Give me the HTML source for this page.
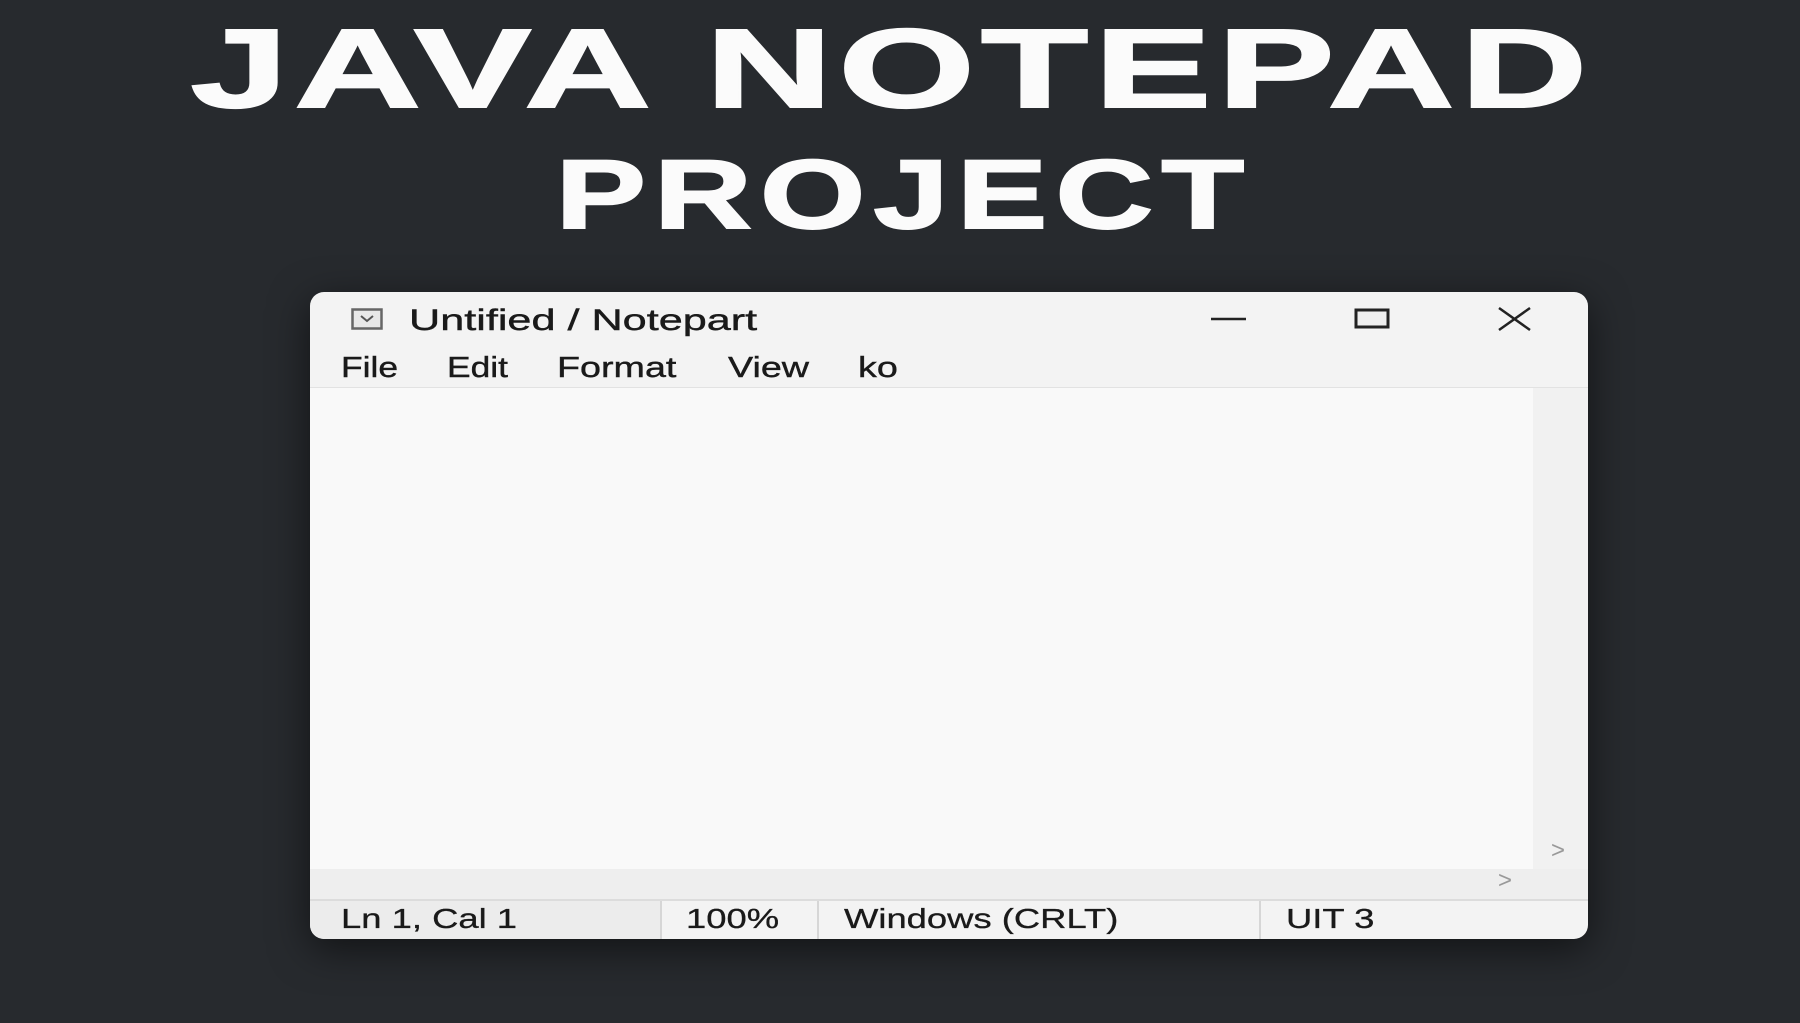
<!DOCTYPE html>
<html><head><meta charset="utf-8"><style>
*{margin:0;padding:0;box-sizing:border-box}
body{width:1800px;height:1023px;background:#272a2e;overflow:hidden;position:relative;font-family:"Liberation Sans",sans-serif}
.h{position:absolute;color:#fbfbfb;font-weight:bold;white-space:nowrap;transform-origin:center center;line-height:1;-webkit-text-stroke:2px #fbfbfb}
.win{position:absolute;left:310px;top:292px;width:1278px;height:647px;background:#f3f3f3;border-radius:14px;box-shadow:0 10px 40px rgba(0,0,0,.55);overflow:hidden}
.t{position:absolute;color:#1a1a1a;font-size:29px;white-space:nowrap;transform-origin:left center;-webkit-text-stroke:.4px #1a1a1a}
.s{position:absolute;color:#1a1a1a;font-size:28px;white-space:nowrap;transform-origin:left center;transform:scaleX(1.3);-webkit-text-stroke:.3px #1a1a1a}
</style></head><body>
<div class="h" style="left:0;width:1784px;top:13px;font-size:112px;text-align:center;letter-spacing:4px;transform:scaleX(1.565)">JAVA NOTEPAD</div>
<div class="h" style="left:0;width:1808px;top:145px;font-size:98px;text-align:center;letter-spacing:6px;transform:scaleX(1.38)">PROJECT</div>
<div class="win">
  <svg style="position:absolute;left:41px;top:16px" width="32" height="22" viewBox="0 0 32 22"><rect x="1.5" y="1.5" width="29" height="19" fill="#e8e8e8" stroke="#666" stroke-width="2.5"/><path d="M10 8l6 5 6-5" fill="none" stroke="#555" stroke-width="2"/></svg>
  <div class="t" style="left:99px;top:12px;font-size:30px;transform:scaleX(1.44)">Untified / Notepart</div>
  <svg style="position:absolute;left:900px;top:14px" width="40" height="20"><line x1="1" y1="13" x2="36" y2="13" stroke="#222" stroke-width="2.5"/></svg>
  <svg style="position:absolute;left:1044px;top:16px" width="38" height="22"><rect x="2" y="2" width="32" height="17" fill="#eee" stroke="#222" stroke-width="3"/></svg>
  <svg style="position:absolute;left:1187px;top:14px" width="36" height="26"><path d="M2 2L33 24M33 2L2 24" stroke="#222" stroke-width="2.5"/></svg>
  <div class="t" style="left:31px;top:60px;transform:scaleX(1.22)">File</div>
  <div class="t" style="left:137px;top:60px;transform:scaleX(1.22)">Edit</div>
  <div class="t" style="left:247px;top:60px;transform:scaleX(1.3)">Format</div>
  <div class="t" style="left:418px;top:60px;transform:scaleX(1.3)">View</div>
  <div class="t" style="left:548px;top:60px;transform:scaleX(1.3)">ko</div>
  <div style="position:absolute;left:0;top:95px;width:1278px;height:1px;background:#e2e2e2"></div>
  <div style="position:absolute;left:0;top:96px;width:1223px;height:481px;background:#f9f9f9"></div>
  <div style="position:absolute;left:1223px;top:96px;width:55px;height:481px;background:#f1f1f1"></div>
  <div style="position:absolute;left:0;top:577px;width:1278px;height:30px;background:#eeeeee"></div>
  <div style="position:absolute;left:1241px;top:545px;color:#999;font-size:24px">&gt;</div>
  <div style="position:absolute;left:1188px;top:575px;color:#999;font-size:24px">&gt;</div>
  <div style="position:absolute;left:0;top:607px;width:1278px;height:2px;background:#dcdcdc"></div>
  <div style="position:absolute;left:0;top:609px;width:350px;height:38px;background:#ececec"></div>
  <div style="position:absolute;left:350px;top:609px;width:2px;height:38px;background:#d6d6d6"></div>
  <div style="position:absolute;left:507px;top:609px;width:2px;height:38px;background:#d6d6d6"></div>
  <div style="position:absolute;left:949px;top:609px;width:2px;height:38px;background:#d6d6d6"></div>
  <div class="s" style="left:31px;top:611px">Ln 1, Cal 1</div>
  <div class="s" style="left:376px;top:611px">100%</div>
  <div class="s" style="left:534px;top:611px">Windows (CRLT)</div>
  <div class="s" style="left:976px;top:611px">UIT 3</div>
</div>
</body></html>
